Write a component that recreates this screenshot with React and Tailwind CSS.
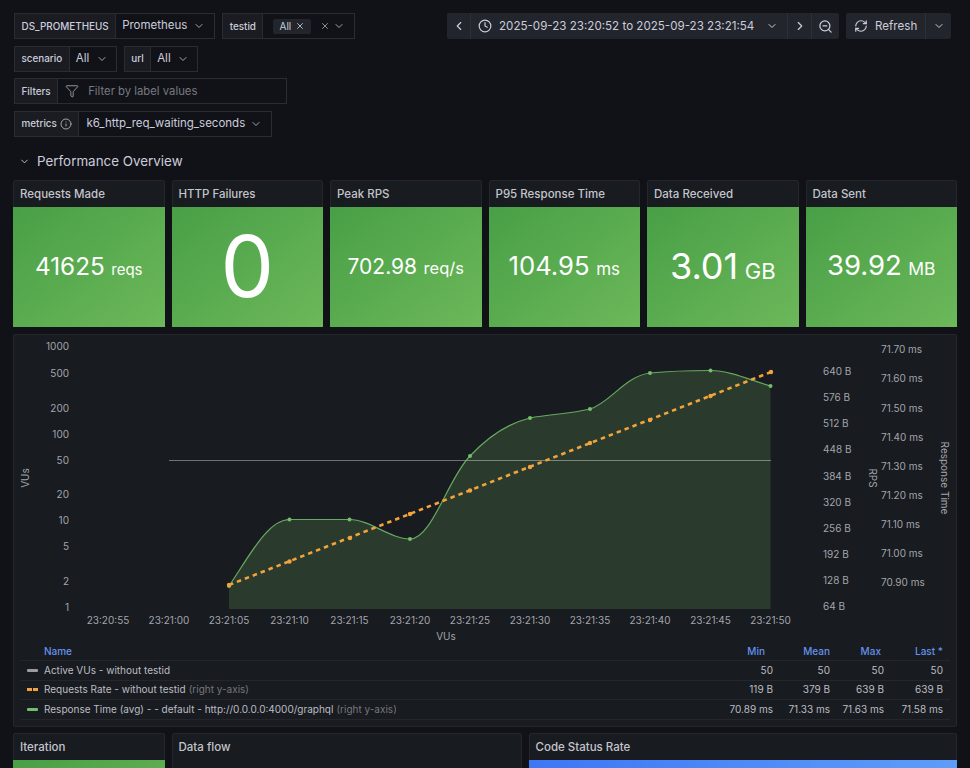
import React from 'react'
import { ChevronDown, ChevronLeft, ChevronRight, Clock, Funnel, Info, RefreshCw, X, ZoomOut } from 'lucide-react'

const stats = [
  { title: 'Requests Made', value: '41625', unit: 'reqs', valueClass: 'text-[24.3px]', unitClass: 'text-[15px]' },
  { title: 'HTTP Failures', value: '0', unit: '', valueClass: 'text-[85px]', unitClass: '' },
  { title: 'Peak RPS', value: '702.98', unit: 'req/s', valueClass: 'text-[21px]', unitClass: 'text-[16.5px]' },
  { title: 'P95 Response Time', value: '104.95', unit: 'ms', valueClass: 'text-[25.7px]', unitClass: 'text-[17px]' },
  { title: 'Data Received', value: '3.01', unit: 'GB', valueClass: 'text-[36px]', unitClass: 'text-[22px]' },
  { title: 'Data Sent', value: '39.92', unit: 'MB', valueClass: 'text-[27.5px]', unitClass: 'text-[17.5px]' },
]

const leftTicks = [['1000', 350], ['500', 377], ['200', 412], ['100', 438], ['50', 464], ['20', 498], ['10', 524], ['5', 550], ['2', 585], ['1', 611]]
const midTicks = [['640 B', 375], ['576 B', 401], ['512 B', 427], ['448 B', 453], ['384 B', 480], ['320 B', 506], ['256 B', 532], ['192 B', 558], ['128 B', 584], ['64 B', 610]]
const rightTicks = [['71.70 ms', 353], ['71.60 ms', 382], ['71.50 ms', 412], ['71.40 ms', 441], ['71.30 ms', 470], ['71.20 ms', 499], ['71.10 ms', 528], ['71.00 ms', 557], ['70.90 ms', 586]]
const timeTicks = [['23:20:55', 108], ['23:21:00', 169], ['23:21:05', 229], ['23:21:10', 289.5], ['23:21:15', 349.5], ['23:21:20', 410], ['23:21:25', 470], ['23:21:30', 530], ['23:21:35', 590], ['23:21:40', 650], ['23:21:45', 710.5], ['23:21:50', 770.5]]

const greenPoints = [[229, 586], [289.5, 519.5], [349.5, 519.5], [410, 539], [470, 456], [530, 418], [590, 409], [650, 373], [710.5, 370.5], [770.5, 386]]
const orangePoints = [[229, 585], [289.5, 561.5], [350, 538], [410, 514], [470, 490.5], [530, 467], [590, 443], [650, 420], [710.5, 396], [771, 372]]

const greenLine = 'M229,586 C250,555 268,519.5 289.5,519.5 C310,519.5 330,519.5 349.5,519.5 C370,519.5 390,539 410,539 C432,539 448,478 470,456 C485,440 505,424 530,418 C550,414 570,414 590,409 C610,403 625,376 650,373 C670,371 690,370.5 710.5,370.5 C730,370.5 750,380 770.5,386'

const legendRows = [
  { name: 'Active VUs - without testid', axis: '', swatch: 'bg-[#9a9ca1]', dashed: false, min: '50', mean: '50', max: '50', last: '50' },
  { name: 'Requests Rate - without testid', axis: '(right y-axis)', swatch: 'bg-[#f2a33c]', dashed: true, min: '119 B', mean: '379 B', max: '639 B', last: '639 B' },
  { name: 'Response Time (avg) - - default - http://0.0.0.0:4000/graphql', axis: '(right y-axis)', swatch: 'bg-[#73bf69]', dashed: false, min: '70.89 ms', mean: '71.33 ms', max: '71.63 ms', last: '71.58 ms' },
]

const Label = ({ children }) => (
  <div className="h-full flex items-center gap-[3px] px-[6.5px] bg-[#1a1c21] border border-[#2a2c31] text-[9.9px] font-medium text-[#ccccdc] whitespace-nowrap">
    {children}
  </div>
)

const Select = ({ children, className }) => (
  <div className={`h-full flex items-center border border-l-0 border-[#2a2c31] bg-[#111217] text-[#ccccdc] text-[11.5px] ${className}`}>
    {children}
  </div>
)

const Chart = () => (
  <svg viewBox="14 335 942 309" className="block w-[942px] h-[309px]" fontFamily="Inter, sans-serif" fontSize="10" fill="#a3a5ad">
    <path d={`${greenLine} L770.5,609 L229,609 Z`} fill="#2a3a2d" />
    <line x1="169" y1="460.5" x2="771" y2="460.5" stroke="#ffffff" strokeOpacity="0.38" />
    <path d={greenLine} fill="none" stroke="#73bf69" strokeOpacity="0.85" strokeWidth="1.2" />
    {greenPoints.map(([x, y]) => <circle key={x} cx={x} cy={y} r="2" fill="#73bf69" />)}
    <line x1="229" y1="585" x2="771" y2="372" stroke="#f2a33c" strokeWidth="2.6" strokeDasharray="4.5 4" />
    {orangePoints.map(([x, y]) => <circle key={x} cx={x} cy={y} r="2.2" fill="#f2a33c" />)}
    {leftTicks.map(([t, y]) => <text key={t} x="69" y={y} textAnchor="end">{t}</text>)}
    {midTicks.map(([t, y]) => <text key={t} x="823" y={y}>{t}</text>)}
    {rightTicks.map(([t, y]) => <text key={t} x="881" y={y}>{t}</text>)}
    {timeTicks.map(([t, x]) => <text key={t} x={x} y="623.5" textAnchor="middle">{t}</text>)}
    <text x="446" y="639.5" textAnchor="middle">VUs</text>
    <text transform="translate(29 478) rotate(-90)" textAnchor="middle">VUs</text>
    <text transform="translate(869 478) rotate(90)" textAnchor="middle">RPS</text>
    <text transform="translate(941 478) rotate(90)" textAnchor="middle">Response Time</text>
  </svg>
)

export default function App() {
  return (
    <div className="h-[768px] overflow-hidden bg-[#111217] font-['Inter',sans-serif] text-[#ccccdc]">
      <div className="flex justify-between pl-[14px] pr-[19px] pt-[13px]">
        <div className="flex flex-col gap-[6.5px]">
          <div className="flex h-[26px] gap-[7px]">
            <div className="flex h-full">
              <Label>DS_PROMETHEUS</Label>
              <Select className="w-[99px] pl-[6px] justify-between pr-[9px]">
                <span>Prometheus</span>
                <ChevronDown size={12} className="text-[#a3a5ad]" />
              </Select>
            </div>
            <div className="flex h-full">
              <Label>testid</Label>
              <Select className="w-[92px] pl-[10px] pr-[9px] justify-between">
                <span className="flex items-center gap-1 h-[15px] px-[6px] bg-[#22252b] rounded-[2px] text-[10px]">All <X size={10} /></span>
                <span className="flex items-center gap-[3px] text-[#a3a5ad]"><X size={10} /><ChevronDown size={12} /></span>
              </Select>
            </div>
          </div>
          <div className="flex h-[26px] gap-[7px]">
            <div className="flex h-full">
              <Label>scenario</Label>
              <Select className="w-[47px] pl-[6px] justify-between pr-[8px]">
                <span>All</span>
                <ChevronDown size={12} className="text-[#a3a5ad]" />
              </Select>
            </div>
            <div className="flex h-full">
              <Label>url</Label>
              <Select className="w-[47px] pl-[6px] justify-between pr-[8px]">
                <span>All</span>
                <ChevronDown size={12} className="text-[#a3a5ad]" />
              </Select>
            </div>
          </div>
          <div className="flex h-[26px]">
            <Label>Filters</Label>
            <Select className="w-[229px] pl-[7px] gap-[9px]">
              <Funnel size={14} className="text-[#a3a5ad]" strokeWidth={1.5} />
              <span className="text-[#777981] text-[11.3px]">Filter by label values</span>
            </Select>
          </div>
          <div className="flex h-[26px]">
            <Label>
              metrics
              <Info size={12} className="text-[#a3a5ad]" />
            </Label>
            <Select className="w-[193px] pl-[7px] pr-[9px] justify-between">
              <span>k6_http_req_waiting_seconds</span>
              <ChevronDown size={12} className="text-[#a3a5ad]" />
            </Select>
          </div>
        </div>

        <div className="flex h-[26px] gap-[7px] text-[11.6px] text-[#ccccdc]">
          <div className="flex h-full bg-[#22252b] rounded-[2px]">
            <div className="w-[23px] flex items-center justify-center"><ChevronLeft size={14} /></div>
            <div className="w-[317px] flex items-center pl-[7px] pr-[9px] border-l border-[#2d3036]">
              <Clock size={14} className="mr-[7px] shrink-0" />
              <span className="flex-1 pt-[1px] whitespace-nowrap">2025-09-23 23:20:52 to 2025-09-23 23:21:54</span>
              <ChevronDown size={12} className="shrink-0" />
            </div>
            <div className="w-[24px] flex items-center justify-center border-l border-[#2d3036]"><ChevronRight size={14} /></div>
            <div className="w-[28px] flex items-center justify-center border-l border-[#2d3036]"><ZoomOut size={15} /></div>
          </div>
          <div className="flex h-full bg-[#22252b] rounded-[2px]">
            <div className="w-[79px] flex items-center pl-[8px] gap-[7px]">
              <RefreshCw size={14} />
              <span className="pt-[1px]">Refresh</span>
            </div>
            <div className="w-[26px] flex items-center justify-center border-l border-[#2d3036]"><ChevronDown size={12} /></div>
          </div>
        </div>
      </div>

      <div className="flex items-center gap-[7px] pl-[19px] h-[18px] mt-[15.5px] text-[13.4px] text-[#ccccdc]">
        <ChevronDown size={11} />
        <span>Performance Overview</span>
      </div>

      <div className="px-[13px] mt-[10px]">
        <div className="grid grid-cols-6 gap-[7px]">
          {stats.map(s => (
            <div key={s.title} className="h-[147px] flex flex-col bg-[#181b1f] border border-[#24262b] rounded-[2px]">
              <div className="h-[26px] shrink-0 flex items-center px-[6px] pt-[1px] text-[11.5px] font-medium text-[#c4c5cc]">{s.title}</div>
              <div className="flex-1 min-h-0 -mx-px -mb-px pb-[2px] flex items-center justify-center bg-gradient-to-br from-[#489f46] to-[#6cb85a] text-white">
                <div className="flex items-baseline gap-[6.5px]">
                  <span className={`leading-none ${s.valueClass}`}>{s.value}</span>
                  {s.unit && <span className={`leading-none ${s.unitClass}`}>{s.unit}</span>}
                </div>
              </div>
            </div>
          ))}
        </div>

        <div className="mt-[7px] h-[393px] bg-[#181b1f] border border-[#24262b] rounded-[2px]">
          <Chart />
          <div className="px-[6px] text-[10px]">
            <div className="flex h-[17px] items-center pb-[2px] border-b border-[#24262b] text-[#6492ec] font-medium">
              <div className="flex-1 pl-[24px]">Name</div>
              <div className="w-[60px] text-right pr-[8px]">Min</div>
              <div className="w-[57px] text-right">Mean</div>
              <div className="w-[54px] text-right pr-[3px]">Max</div>
              <div className="w-[66px] text-right pr-[7px]">Last *</div>
            </div>
            {legendRows.map(row => (
              <div key={row.name} className="flex h-[19.5px] items-center border-b border-[#24262b] text-[#bcbdc4]">
                <div className="flex-1 flex items-center pl-[7px]">
                  {row.dashed ? (
                    <span className="w-[11px] flex justify-between">
                      <span className={`w-[5px] h-[3px] ${row.swatch}`} />
                      <span className={`w-[5px] h-[3px] ${row.swatch}`} />
                    </span>
                  ) : (
                    <span className={`w-[11px] h-[3px] rounded-[1px] ${row.swatch}`} />
                  )}
                  <span className="ml-[6px] whitespace-nowrap">{row.name}</span>
                  {row.axis && <span className="ml-[3px] text-[#75777e]">{row.axis}</span>}
                </div>
                <div className="w-[60px] text-right whitespace-nowrap">{row.min}</div>
                <div className="w-[57px] text-right whitespace-nowrap">{row.mean}</div>
                <div className="w-[54px] text-right whitespace-nowrap">{row.max}</div>
                <div className="w-[66px] text-right pr-[7px] whitespace-nowrap">{row.last}</div>
              </div>
            ))}
          </div>
        </div>

        <div className="flex gap-[7px] mt-[6px]">
          <div className="w-[151.5px] h-[80px] flex flex-col bg-[#181b1f] border border-[#24262b] rounded-[2px]">
            <div className="h-[26px] shrink-0 flex items-center px-[6px] pt-[1px] text-[11.5px] font-medium text-[#c4c5cc]">Iteration</div>
            <div className="h-[54px] -mx-px bg-gradient-to-br from-[#489f46] to-[#6cb85a]" />
          </div>
          <div className="w-[350px] h-[80px] bg-[#181b1f] border border-[#24262b] rounded-[2px]">
            <div className="h-[26px] flex items-center px-[6px] pt-[1px] text-[11.5px] font-medium text-[#c4c5cc]">Data flow</div>
          </div>
          <div className="flex-1 h-[80px] flex flex-col bg-[#181b1f] border border-[#24262b] rounded-[2px]">
            <div className="h-[26px] shrink-0 flex items-center px-[6px] pt-[1px] text-[11.5px] font-medium text-[#c4c5cc]">Code Status Rate</div>
            <div className="h-[54px] -mx-px bg-gradient-to-r from-[#3e76f5] to-[#5f9cf8]" />
          </div>
        </div>
      </div>
    </div>
  )
}
